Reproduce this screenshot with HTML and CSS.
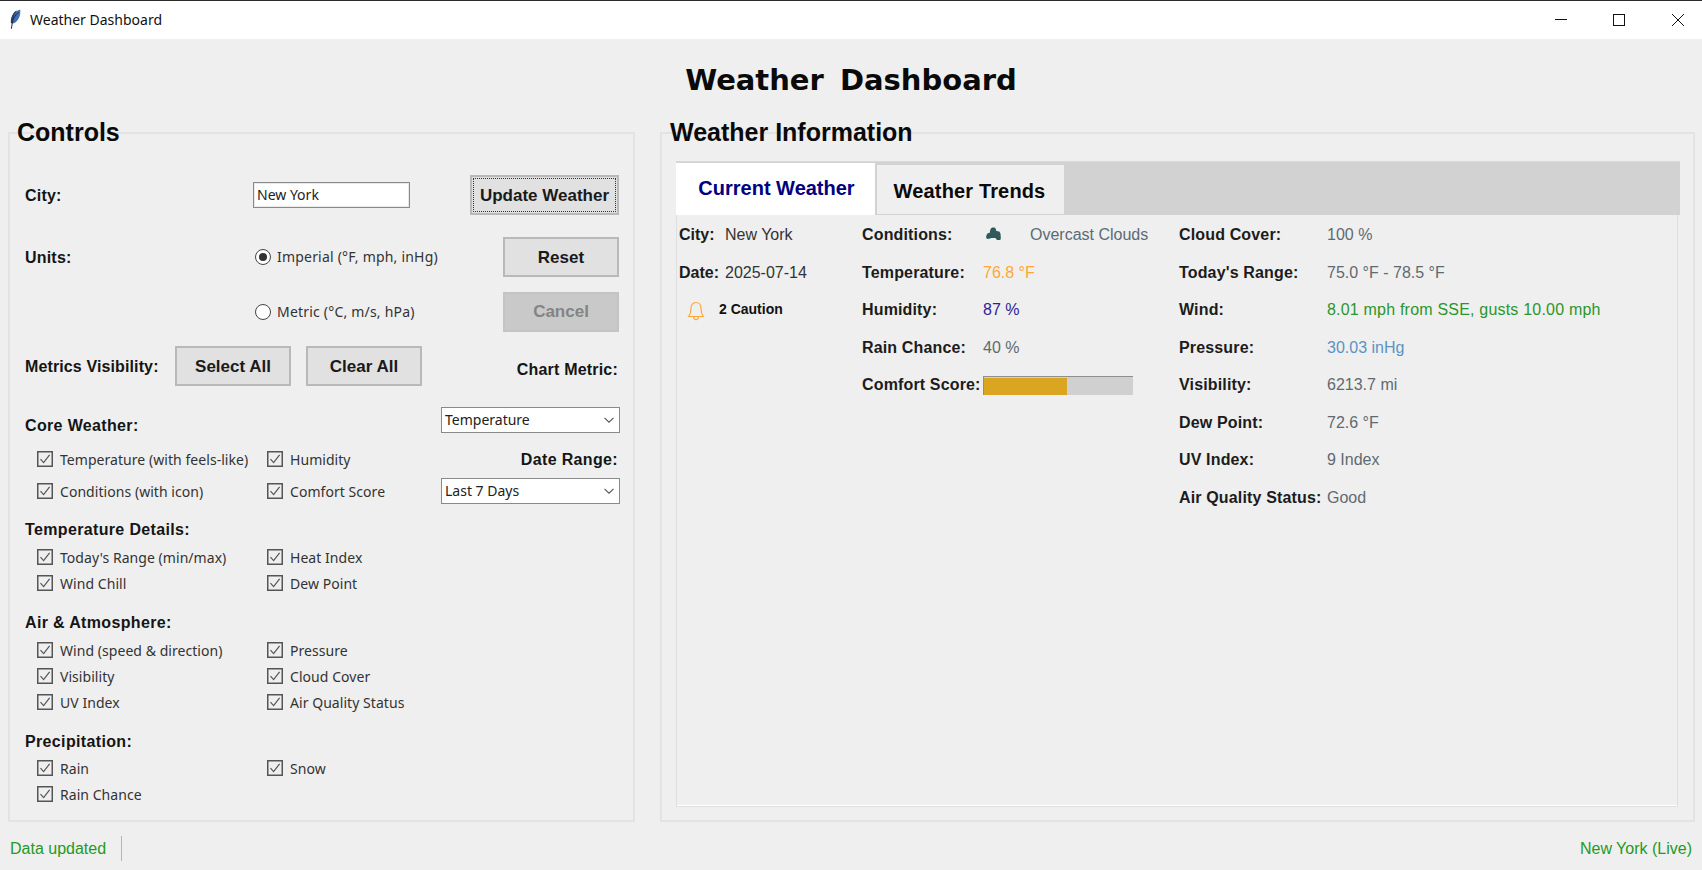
FILE: index.html
```html
<!DOCTYPE html>
<html lang="en">
<head>
<meta charset="utf-8">
<title>Weather Dashboard</title>
<link rel="stylesheet" href="styles.css">
</head>
<body>
<svg class="defs" width="0" height="0">
  <symbol id="chk" viewBox="0 0 16 16">
    <rect x="0.75" y="0.75" width="14.5" height="14.5" fill="none" stroke="#555" stroke-width="1.5"/>
    <path d="M3.5 8.2 L6.6 11.6 L12.6 3.8" fill="none" stroke="#555" stroke-width="1.2"/>
  </symbol>
  <symbol id="chev" viewBox="0 0 10 6">
    <path d="M0.5 0.8 L5 5.2 L9.5 0.8" fill="none" stroke="#555" stroke-width="1.1"/>
  </symbol>
</svg>
<div class="app">
  <header class="titlebar">
    <svg class="feather" viewBox="0 0 12 20" width="12" height="20">
      <path d="M2 14 C1.2 9 4.4 2.4 11.2 0.4 C11.8 6 10 11.6 4.4 14.6 Z" fill="#3f6fb5"/>
      <path d="M2 14 C1.2 9 4.4 2.4 8 1.6 C5.4 5 4 9 3.6 14.4 Z" fill="#2b3f66"/>
      <path d="M2.4 19.8 L3.4 13 C4.4 9 6.6 6 9.4 3.2" fill="none" stroke="#1d2c44" stroke-width="1"/>
    </svg>
    <span class="titlebar-text">Weather Dashboard</span>
    <div class="winctl">
      <svg width="14" height="14" viewBox="0 0 14 14"><path d="M2 6.5 H14" stroke="#111" stroke-width="1"/></svg>
      <svg width="14" height="14" viewBox="0 0 14 14"><rect x="1.5" y="1.5" width="11" height="11" fill="none" stroke="#111" stroke-width="1"/></svg>
      <svg width="14" height="14" viewBox="0 0 14 14"><path d="M1 1 L13 13 M13 1 L1 13" stroke="#111" stroke-width="1" fill="none"/></svg>
    </div>
  </header>

  <h1 class="apptitle">Weather Dashboard</h1>

  <main class="panels">
    <section class="panel controls">
      <h2 class="legend">Controls</h2>

      <div class="row row-city">
        <span class="lbl lbl-main">City:</span>
        <div class="ctl-mid"><div class="entry">New York</div></div>
        <button class="btn btn-focus"><span class="focus-ring">Update Weather</span></button>
      </div>
      <div class="row row-units">
        <span class="lbl lbl-main">Units:</span>
        <div class="ctl-mid radio"><span class="radio-dot on"></span><span>Imperial (°F, mph, inHg)</span></div>
        <button class="btn btn-side">Reset</button>
      </div>
      <div class="row row-metric">
        <span class="lbl lbl-main"></span>
        <div class="ctl-mid radio"><span class="radio-dot"></span><span>Metric (°C, m/s, hPa)</span></div>
        <button class="btn btn-side btn-off">Cancel</button>
      </div>
      <div class="row row-vis">
        <span class="lbl lbl-vis">Metrics Visibility:</span>
        <button class="btn btn-side">Select All</button>
        <button class="btn btn-side btn-next">Clear All</button>
        <span class="lbl lbl-chart">Chart Metric:</span>
      </div>

      <div class="lower">
        <div class="groups">
          <div class="grp grp-core">
            <h3 class="lbl grp-h">Core Weather:</h3>
            <div class="checks">
              <label class="chk"><svg width="16" height="16"><use href="#chk"/></svg>Temperature (with feels-like)</label>
              <label class="chk"><svg width="16" height="16"><use href="#chk"/></svg>Humidity</label>
              <label class="chk"><svg width="16" height="16"><use href="#chk"/></svg>Conditions (with icon)</label>
              <label class="chk"><svg width="16" height="16"><use href="#chk"/></svg>Comfort Score</label>
            </div>
          </div>
          <div class="grp">
            <h3 class="lbl grp-h">Temperature Details:</h3>
            <div class="checks">
              <label class="chk"><svg width="16" height="16"><use href="#chk"/></svg>Today's Range (min/max)</label>
              <label class="chk"><svg width="16" height="16"><use href="#chk"/></svg>Heat Index</label>
              <label class="chk"><svg width="16" height="16"><use href="#chk"/></svg>Wind Chill</label>
              <label class="chk"><svg width="16" height="16"><use href="#chk"/></svg>Dew Point</label>
            </div>
          </div>
          <div class="grp">
            <h3 class="lbl grp-h">Air &amp; Atmosphere:</h3>
            <div class="checks">
              <label class="chk"><svg width="16" height="16"><use href="#chk"/></svg>Wind (speed &amp; direction)</label>
              <label class="chk"><svg width="16" height="16"><use href="#chk"/></svg>Pressure</label>
              <label class="chk"><svg width="16" height="16"><use href="#chk"/></svg>Visibility</label>
              <label class="chk"><svg width="16" height="16"><use href="#chk"/></svg>Cloud Cover</label>
              <label class="chk"><svg width="16" height="16"><use href="#chk"/></svg>UV Index</label>
              <label class="chk"><svg width="16" height="16"><use href="#chk"/></svg>Air Quality Status</label>
            </div>
          </div>
          <div class="grp grp-precip">
            <h3 class="lbl grp-h">Precipitation:</h3>
            <div class="checks">
              <label class="chk"><svg width="16" height="16"><use href="#chk"/></svg>Rain</label>
              <label class="chk"><svg width="16" height="16"><use href="#chk"/></svg>Snow</label>
              <label class="chk"><svg width="16" height="16"><use href="#chk"/></svg>Rain Chance</label>
            </div>
          </div>
        </div>
        <div class="selects">
          <div class="combo"><span>Temperature</span><svg width="10" height="6"><use href="#chev"/></svg></div>
          <span class="lbl lbl-date">Date Range:</span>
          <div class="combo"><span>Last 7 Days</span><svg width="10" height="6"><use href="#chev"/></svg></div>
        </div>
      </div>
    </section>

    <section class="panel info">
      <h2 class="legend">Weather Information</h2>
      <div class="tabbar">
        <div class="tab tab-on">Current Weather</div>
        <div class="tab tab-off">Weather Trends</div>
      </div>
      <div class="tabbody">
        <div class="col col-a">
          <div class="kv"><span class="k k-a">City:</span><span class="v c-dark">New York</span></div>
          <div class="kv"><span class="k k-a">Date:</span><span class="v c-dark">2025-07-14</span></div>
          <div class="kv alert">
            <svg class="bell" width="18" height="20" viewBox="0 0 18 20">
              <path d="M9 1.5 C5.4 1.5 4 4.2 4 7.5 C4 11.5 3.2 13.5 1.6 15.5 H16.4 C14.8 13.5 14 11.5 14 7.5 C14 4.2 12.6 1.5 9 1.5 Z M6.5 15.8 C6.7 17.8 7.8 18.6 9 18.6 C10.2 18.6 11.3 17.8 11.5 15.8" fill="none" stroke="#ffa733" stroke-width="1.2"/>
            </svg>
            <span class="alert-text">2 Caution</span>
          </div>
        </div>
        <div class="col col-b">
          <div class="kv"><span class="k k-b">Conditions:</span>
            <svg class="cloud" width="15" height="13" viewBox="0 0 15 13">
              <path d="M0.2 11 C0 9 0.6 6.6 2.4 6 L3.8 5.8 C4 3 4.6 0.6 6.6 0.4 H8.4 C9.6 0.6 10 2.6 10.4 4 L13.2 4.4 C14.6 5 14.8 8 14.8 12 L14 13 H11 L9.4 11 H5.6 L4 11.6 L1.4 12 Z" fill="#2f5a58"/>
            </svg>
            <span class="v c-slate">Overcast Clouds</span></div>
          <div class="kv"><span class="k k-b">Temperature:</span><span class="v c-orange">76.8 °F</span></div>
          <div class="kv"><span class="k k-b">Humidity:</span><span class="v c-navy">87 %</span></div>
          <div class="kv"><span class="k k-b">Rain Chance:</span><span class="v c-grey">40 %</span></div>
          <div class="kv"><span class="k k-b">Comfort Score:</span><div class="bar"><div class="bar-fill" style="width:56%"></div></div></div>
        </div>
        <div class="col col-c">
          <div class="kv"><span class="k k-c">Cloud Cover:</span><span class="v c-grey">100 %</span></div>
          <div class="kv"><span class="k k-c">Today's Range:</span><span class="v c-grey">75.0 °F - 78.5 °F</span></div>
          <div class="kv"><span class="k k-c">Wind:</span><span class="v c-green">8.01 mph from SSE, gusts 10.00 mph</span></div>
          <div class="kv"><span class="k k-c">Pressure:</span><span class="v c-blue">30.03 inHg</span></div>
          <div class="kv"><span class="k k-c">Visibility:</span><span class="v c-grey">6213.7 mi</span></div>
          <div class="kv"><span class="k k-c">Dew Point:</span><span class="v c-grey">72.6 °F</span></div>
          <div class="kv"><span class="k k-c">UV Index:</span><span class="v c-grey">9 Index</span></div>
          <div class="kv"><span class="k k-c">Air Quality Status:</span><span class="v c-grey">Good</span></div>
        </div>
      </div>
    </section>
  </main>

  <footer class="status">
    <span class="status-l">Data updated</span>
    <span class="status-sep"></span>
    <span class="status-r">New York (Live)</span>
  </footer>
</div>
</body>
</html>
```
FILE: styles.css
```css
* { box-sizing: border-box; }
html, body { margin: 0; height: 100%; }
body { background: #efefef; font-family: "Liberation Sans", Arial, sans-serif; color: #111; overflow: hidden; }
.defs { position: absolute; }
.app { width: 1702px; height: 870px; display: flex; flex-direction: column; }

.titlebar { height: 39px; flex: none; background: #fff; border-top: 1px solid #2b2b2b; display: flex; align-items: center; padding-left: 9px; }
.feather { margin-top: -2px; }
.titlebar-text { margin-left: 9px; font: 14px "Noto Sans", sans-serif; color: #111; margin-top: -2px; }
.winctl { margin-left: auto; display: flex; gap: 45px; padding-right: 17px; margin-top: -1px; }

.apptitle { height: 93px; flex: none; margin: 0; text-align: center; font: bold 29px/83px "DejaVu Sans", sans-serif; color: #0a0a0a; word-spacing: 6px; }

.panels { display: grid; grid-template-columns: 627px 1035px; column-gap: 25px; margin-left: 8px; height: 689px; flex: none; }
.panel { position: relative; border: 2px solid #e3e3e3; }
.legend { position: absolute; left: 7px; top: -16px; margin: 0; font: bold 25px/28px "Liberation Sans", sans-serif; color: #0a0a0a; white-space: nowrap; }
.info .legend { left: 8px; }

.controls { padding: 41px 14px 0 15px; }
.lbl { font: bold 16px/20px "Liberation Sans", sans-serif; color: #151515; margin: 0; letter-spacing: .2px; }
.row { display: flex; align-items: center; }
.lbl-main { width: 228px; flex: none; padding-top: 2px; }
.ctl-mid { flex: 1; }
.row-city { height: 40px; }
.row-units { height: 39px; margin-top: 22px; }
.row-metric { height: 39px; margin-top: 16px; }
.row-vis { height: 40px; margin-top: 15px; }
.lbl-vis { width: 150px; flex: none; padding-top: 2px; letter-spacing: .12px; }
.lbl-chart { margin-left: auto; margin-top: 8px; margin-right: 1px; }
.btn-next { margin-left: 15px; }

.entry { width: 157px; height: 26px; background: #fff; border: 1px solid #8a8a8a; box-shadow: inset 0 0 0 1px #e9e9e9; font: 14px/24px "Noto Sans", sans-serif; padding-left: 3px; color: #222; }
.radio { display: flex; align-items: center; gap: 6px; padding-left: 2px; font: 14px "Noto Sans", sans-serif; color: #333; letter-spacing: .2px; }
.radio-dot { width: 16px; height: 16px; border-radius: 50%; border: 1.5px solid #444; background: #fff; flex: none; display: flex; align-items: center; justify-content: center; }
.radio-dot.on::after { content: ""; width: 8px; height: 8px; border-radius: 50%; background: #333; }

.btn { font: bold 17px "Liberation Sans", sans-serif; color: #1a1a1a; background: #e1e1e1; border: 2px solid #b9b9b9; padding: 2px 0 0; height: 40px; }
.btn-focus { width: 149px; padding: 1px; }
.focus-ring { display: flex; align-items: center; justify-content: center; height: 100%; border: 1px dotted #333; padding-top: 2px; }
.btn-side { width: 116px; flex: none; }
.btn-off { background: #c9c9c9; color: #848484; border-color: #c4c4c4; padding-top: 0; }

.lower { display: flex; justify-content: space-between; }
.groups { padding-top: 26px; flex: none; width: 410px; }
.grp { margin-bottom: 13px; }
.grp-core { margin-bottom: 9px; }
.grp-h { height: 26px; line-height: 28px; margin-bottom: 2px; letter-spacing: .35px; }
.grp-core .grp-h { margin-bottom: 5px; }
.grp-precip .grp-h { margin-bottom: 1px; }
.checks { display: grid; grid-template-columns: 230px 170px; padding-left: 12px; grid-auto-rows: 26px; }
.grp-core .checks { grid-auto-rows: 32px; }
.chk { display: flex; align-items: center; gap: 7px; font: 14px "Noto Sans", sans-serif; color: #333; white-space: nowrap; letter-spacing: .05px; }

.selects { width: 179px; flex: none; margin-right: -1px; padding-top: 21px; display: flex; flex-direction: column; }
.combo { height: 26px; background: #fff; border: 1px solid #8a8a8a; display: flex; align-items: center; justify-content: space-between; padding: 0 5px 1px 3px; font: 14px "Noto Sans", sans-serif; color: #222; }
.lbl-date { text-align: right; height: 45px; line-height: 53px; padding-right: 2px; letter-spacing: .35px; }

.info { padding: 27px 13px 13px 14px; display: flex; flex-direction: column; }
.tabbar { height: 54px; flex: none; background: #d2d2d2; border-top: 1px solid #d9d9d9; display: flex; align-items: flex-end; }
.tab { font: bold 20px/24px "Liberation Sans", sans-serif; display: flex; justify-content: center; }
.tab-on { width: 199px; height: 52px; background: #fff; color: #000080; padding: 13px 0 0 2px; }
.tab-off { width: 187px; height: 49px; margin-left: 2px; background: #efefef; color: #0a0a0a; padding: 14px 2px 0 0; margin-bottom: 1px; letter-spacing: .15px; }
.tabbody { flex: 1; width: 1002px; border: 1px solid #dedede; border-top: 0; padding: 1.5px 0 0 1px; display: flex; box-shadow: inset 0 -1px 0 #fff; }
.col { display: flex; flex-direction: column; }
.col-a { width: 184px; padding-left: 1px; }
.col-b { width: 317px; }
.col-c { flex: 1; }
.kv { height: 37.5px; display: flex; align-items: center; font: 16px/20px "Liberation Sans", sans-serif; white-space: nowrap; }
.k { font-weight: bold; color: #1c1c1c; flex: none; letter-spacing: .15px; }
.k-a { width: 46px; letter-spacing: 0; }
.k-b { width: 121px; }
.k-c { width: 148px; }
.cloud { margin: -3px 29px 0 3px; flex: none; }
.alert { padding-left: 8px; }
.bell { flex: none; margin-top: 2px; }
.alert-text { font: bold 14px "Liberation Sans", sans-serif; margin-left: 14px; margin-top: -3px; color: #111; }
.c-dark { color: #333; }
.c-slate { color: #5a6b75; }
.c-orange { color: #ffa733; }
.c-navy { color: #2b2396; }
.c-grey { color: #5f6a70; }
.c-green { color: #2b962b; letter-spacing: .2px; }
.c-blue { color: #5b93c4; }
.bar { width: 150px; height: 19px; background: #d0d0d0; border-top: 1px solid #8f8f8f; border-left: 1px solid #8f8f8f; padding-top: 1px; }
.bar-fill { height: 100%; background: #daa520; }

.status { flex: 1; display: flex; align-items: center; padding: 6px 10px 0; font: 16px "Liberation Sans", sans-serif; color: #239a23; }
.status-sep { width: 1px; height: 25px; background: #b5b5b5; margin-left: 15px; }
.status-r { margin-left: auto; }
```
